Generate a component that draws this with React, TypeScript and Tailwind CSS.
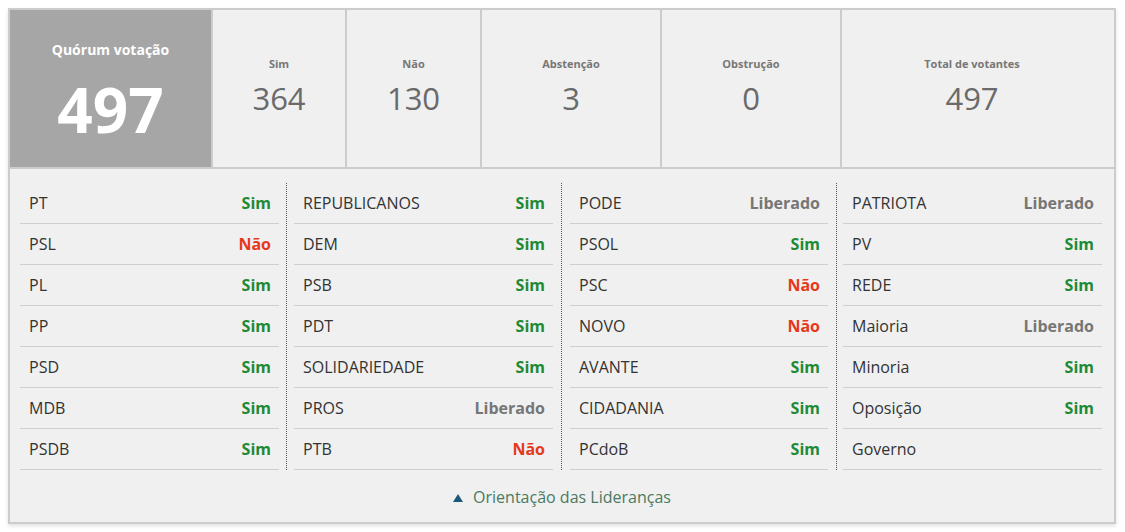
import React from 'react'

type Voto = 'Sim' | 'Não' | 'Liberado' | ''

const colunas: [string, Voto][][] = [
    [['PT', 'Sim'], ['PSL', 'Não'], ['PL', 'Sim'], ['PP', 'Sim'], ['PSD', 'Sim'], ['MDB', 'Sim'], ['PSDB', 'Sim']],
    [['REPUBLICANOS', 'Sim'], ['DEM', 'Sim'], ['PSB', 'Sim'], ['PDT', 'Sim'], ['SOLIDARIEDADE', 'Sim'], ['PROS', 'Liberado'], ['PTB', 'Não']],
    [['PODE', 'Liberado'], ['PSOL', 'Sim'], ['PSC', 'Não'], ['NOVO', 'Não'], ['AVANTE', 'Sim'], ['CIDADANIA', 'Sim'], ['PCdoB', 'Sim']],
    [['PATRIOTA', 'Liberado'], ['PV', 'Sim'], ['REDE', 'Sim'], ['Maioria', 'Liberado'], ['Minoria', 'Sim'], ['Oposição', 'Sim'], ['Governo', '']],
]

// padding of each column so the row lines start/end where they do in the page
const colPad = [
    'pl-[8px] pr-[7px] border-r border-dotted border-[#555555]',
    'pl-[7px] pr-[8px] border-r border-dotted border-[#555555]',
    'pl-[8px] pr-[8px] border-r border-dotted border-[#555555]',
    'pl-[6px] pr-[10px]',
]

const totais = [
    { label: 'Sim', valor: 364, w: 'w-[134px]' },
    { label: 'Não', valor: 130, w: 'w-[135px]' },
    { label: 'Abstenção', valor: 3, w: 'w-[180px]' },
    { label: 'Obstrução', valor: 0, w: 'w-[180px]' },
    { label: 'Total de votantes', valor: 497, w: 'flex-1 pr-[12px]' },
]

const corVoto: Record<Voto, string> = {
    Sim: 'text-[#1e8a35]',
    Não: 'text-[#e5391b]',
    Liberado: 'text-[#767676]',
    '': '',
}

export default function App() {
    return (
        <div className="min-h-[532px] bg-white pt-[8px] pl-[8px] font-['Open_Sans',sans-serif]">
            <div className="w-[1108px] border-2 border-[#cccccc] bg-[#f0f0f0] shadow-[0_2px_4px_rgba(0,0,0,0.12)]">
                {/* Totais */}
                <div className="flex h-[159px] border-b-2 border-[#cccccc]">
                    <div className="flex w-[201px] flex-col items-center bg-[#a6a6a6] pt-[30px] text-white">
                        <span className="text-[14px] font-bold leading-[20px]">Quórum votação</span>
                        <span className="mt-[18px] text-[62px] font-bold leading-none">497</span>
                    </div>
                    {totais.map((t) => (
                        <div key={t.label} className={`${t.w} flex flex-col items-center border-l-2 border-[#cccccc] pt-[46px]`}>
                            <span className="text-[11px] font-bold leading-[16px] text-[#777777]">{t.label}</span>
                            <span className="mt-[6px] text-[31px] leading-[40px] text-[#6a6a6a]">{t.valor}</span>
                        </div>
                    ))}
                </div>

                {/* Orientação */}
                <div className="grid grid-cols-4 px-[2px] pt-[14px]">
                    {colunas.map((col, i) => (
                        <div key={i} className={colPad[i]}>
                            {col.map(([partido, voto]) => (
                                <div key={partido} className="flex h-[41px] items-center justify-between border-b border-[#cfcfcf] pl-[9px] pr-[8px] text-[16px]">
                                    <span className="text-[#333333]">{partido}</span>
                                    <span className={`font-bold ${corVoto[voto]}`}>{voto}</span>
                                </div>
                            ))}
                        </div>
                    ))}
                </div>

                <div className="flex items-center justify-center gap-[10px] pb-[13px] pt-[15px] text-[16px] leading-[24px] text-[#4a7a62]">
                    <svg width="10" height="8" viewBox="0 0 10 8" className="mt-[1px]">
                        <path d="M5 0 L10 8 L0 8 Z" fill="#1b587c" />
                    </svg>
                    <span>Orientação das Lideranças</span>
                </div>
            </div>
        </div>
    )
}
